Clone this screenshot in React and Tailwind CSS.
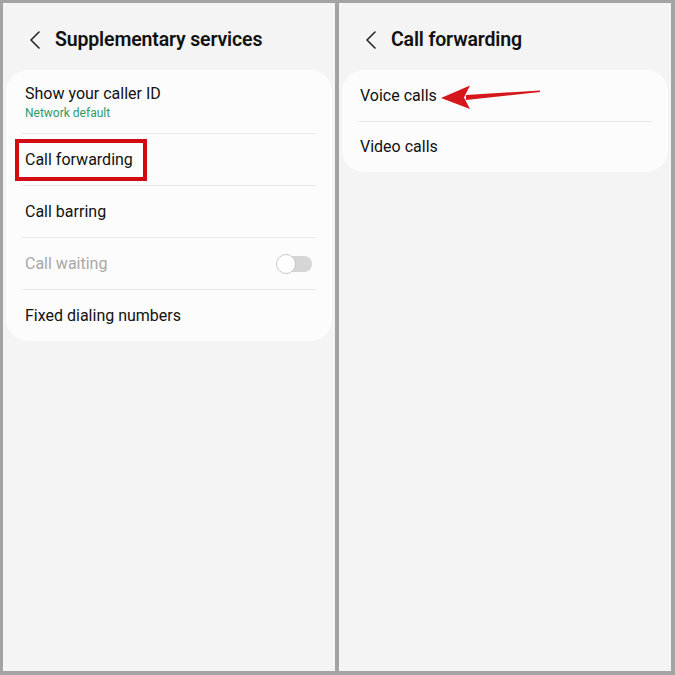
const font = { fontFamily: "Roboto, 'Noto Sans', 'Liberation Sans', sans-serif" };

function Header({ title }) {
  return (
    <div className="flex items-center h-[67px] pt-[6px] pl-[21px]">
      <svg width="22" height="22" viewBox="0 0 22 22" className="text-[#222]">
        <path d="M15 3 L7 11 L15 19" fill="none" stroke="currentColor" strokeWidth="1.6" strokeLinecap="round" strokeLinejoin="round" />
      </svg>
      <h1 className="ml-[9px] text-[19.5px] font-semibold text-[#111] tracking-[-0.15px]">{title}</h1>
    </div>
  );
}

function Divider() {
  return <div className="mx-[16px] h-px bg-[#e9e9e9]" />;
}

function Toggle() {
  return (
    <div className="relative w-[36px] h-[20px]">
      <div className="absolute inset-y-[2px] left-[2px] right-0 rounded-full bg-[#d6d6d6]" />
      <div className="absolute left-0 top-0 w-[20px] h-[20px] rounded-full bg-white border border-[#c8c8c8]" />
    </div>
  );
}

function Arrow() {
  return (
    <svg width="104" height="26" viewBox="0 0 104 26" className="absolute left-[440px] top-[84px]">
      <path d="M26 11 L100 6.5 L100 8 L26 16 Z" fill="#d5161b" />
      <path d="M1 14 L30 1.5 L24 13.5 L30 25 Z" fill="#d5161b" />
    </svg>
  );
}

export default function App() {
  return (
    <div className="w-[675px] h-[675px] bg-[#a3a3a3] pt-[3px] pl-[3px] flex gap-[4px]" style={font}>
      {/* left panel */}
      <div className="w-[332px] h-[668px] bg-[#f4f4f4] flex flex-col">
        <Header title="Supplementary services" />
        <div className="mx-[3px] bg-[#fcfcfc] rounded-[22px] pt-[3px]">
          <div className="h-[60px] flex flex-col justify-center pl-[19px] pb-[1px]">
            <div className="text-[16px] text-[#111] leading-[20px]">Show your caller ID</div>
            <div className="text-[12px] text-[#2e9a6b] leading-[16px] mt-[1px]">Network default</div>
          </div>
          <Divider />
          <div className="h-[51px] flex items-center pl-[9px]">
            <div className="border-[4px] border-[#d30a12] h-[42px] w-[132px] flex items-center pl-[6px] text-[16px] text-[#111]">
              Call forwarding
            </div>
          </div>
          <Divider />
          <div className="h-[51px] flex items-center pl-[19px] text-[16px] text-[#111]">Call barring</div>
          <Divider />
          <div className="h-[51px] flex items-center justify-between pl-[19px] pr-[20px] text-[16px] text-[#a8a8a8]">
            <span>Call waiting</span>
            <Toggle />
          </div>
          <Divider />
          <div className="h-[51px] flex items-center pl-[19px] text-[16px] text-[#111]">Fixed dialing numbers</div>
        </div>
      </div>

      {/* right panel */}
      <div className="w-[332px] h-[668px] bg-[#f4f4f4] flex flex-col">
        <Header title="Call forwarding" />
        <div className="mx-[3px] bg-[#fcfcfc] rounded-[22px]">
          <div className="h-[51px] flex items-center pl-[18px] text-[16px] text-[#111]">Voice calls</div>
          <Divider />
          <div className="h-[50px] flex items-center pl-[18px] text-[16px] text-[#111]">Video calls</div>
        </div>
      </div>
      <Arrow />
    </div>
  );
}
